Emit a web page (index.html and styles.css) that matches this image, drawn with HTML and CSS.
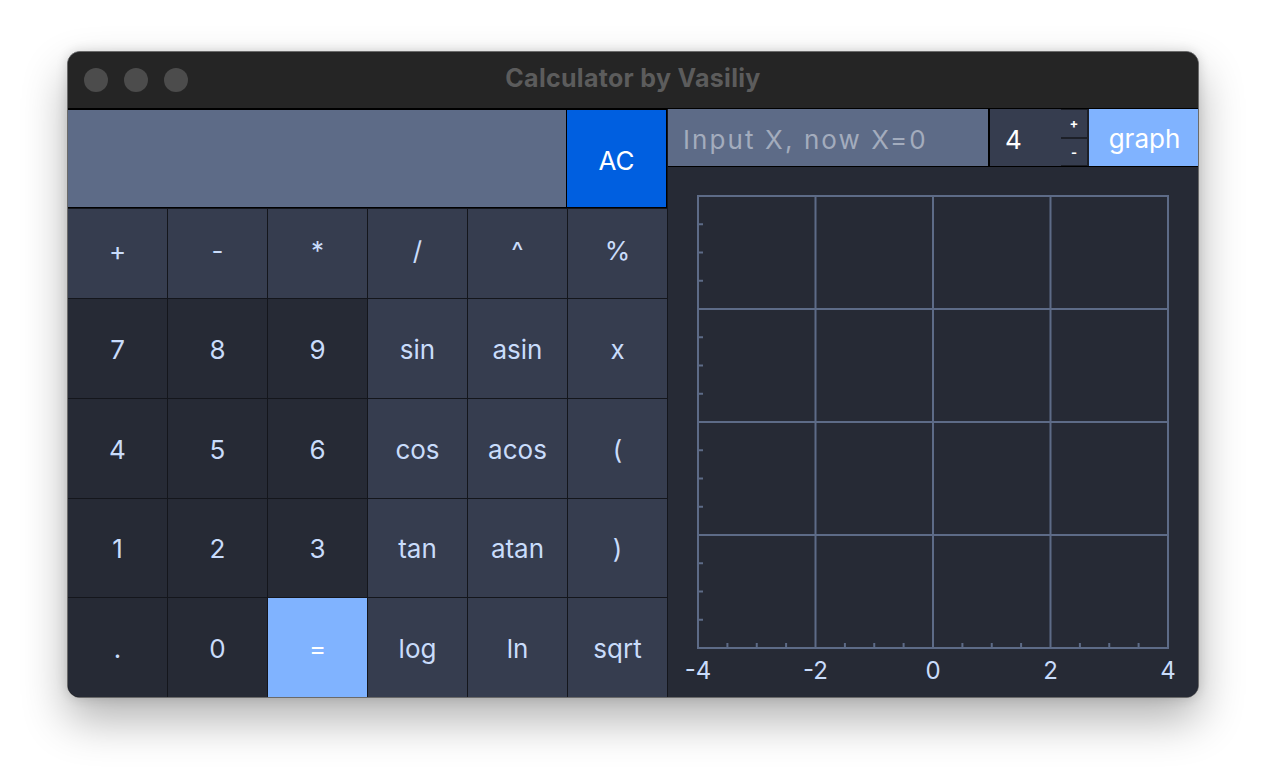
FILE: index.html
```html
<!DOCTYPE html>
<html lang="en">
<head>
<meta charset="utf-8">
<title>Calculator by Vasiliy</title>
<link rel="stylesheet" href="styles.css">
</head>
<body>
<div class="window">
  <div class="titlebar">
    <div class="lights"><span class="light"></span><span class="light"></span><span class="light"></span></div>
    <div class="title">Calculator by Vasiliy</div>
  </div>
  <div class="content">
    <div class="calc">
      <div class="top-row">
        <div class="display"></div>
        <button class="btn ac">AC</button>
      </div>
      <div class="keys">
        <button class="btn op">+</button>
        <button class="btn op">-</button>
        <button class="btn op">*</button>
        <button class="btn op">/</button>
        <button class="btn op">^</button>
        <button class="btn op">%</button>

        <button class="btn num">7</button>
        <button class="btn num">8</button>
        <button class="btn num">9</button>
        <button class="btn op">sin</button>
        <button class="btn op">asin</button>
        <button class="btn op">x</button>

        <button class="btn num">4</button>
        <button class="btn num">5</button>
        <button class="btn num">6</button>
        <button class="btn op">cos</button>
        <button class="btn op">acos</button>
        <button class="btn op">(</button>

        <button class="btn num">1</button>
        <button class="btn num">2</button>
        <button class="btn num">3</button>
        <button class="btn op">tan</button>
        <button class="btn op">atan</button>
        <button class="btn op">)</button>

        <button class="btn num">.</button>
        <button class="btn num">0</button>
        <button class="btn eq">=</button>
        <button class="btn op">log</button>
        <button class="btn op">ln</button>
        <button class="btn op">sqrt</button>
      </div>
    </div>
    <div class="graph-panel">
      <div class="controls">
        <input class="x-input" type="text" placeholder="Input X, now X=0">
        <div class="spin-value">4</div>
        <div class="spin-btns">
          <button class="spin">+</button>
          <button class="spin">-</button>
        </div>
        <button class="graph-btn">graph</button>
      </div>
      <div class="plot">
        <svg width="530" height="530" viewBox="0 0 530 530" xmlns="http://www.w3.org/2000/svg">
          <g stroke="#5d6b87" stroke-width="2" fill="none">
            <rect x="30" y="29" width="470" height="452"/>
            <line x1="147.5" y1="29" x2="147.5" y2="481"/>
            <line x1="265" y1="29" x2="265" y2="481"/>
            <line x1="382.5" y1="29" x2="382.5" y2="481"/>
            <line x1="30" y1="142" x2="500" y2="142"/>
            <line x1="30" y1="255" x2="500" y2="255"/>
            <line x1="30" y1="368" x2="500" y2="368"/>
          </g>
          <g fill="#c9dcfb" font-family="Inter, 'Liberation Sans', sans-serif" font-size="24" text-anchor="middle">
            <text x="30" y="512">-4</text>
            <text x="147.5" y="512">-2</text>
            <text x="265" y="512">0</text>
            <text x="382.5" y="512">2</text>
            <text x="500" y="512">4</text>
          </g>
          <g stroke="#5d6b87" stroke-width="2">
            <line x1="30" y1="57.25" x2="35" y2="57.25"/>
            <line x1="30" y1="85.5" x2="35" y2="85.5"/>
            <line x1="30" y1="113.75" x2="35" y2="113.75"/>
            <line x1="30" y1="170.25" x2="35" y2="170.25"/>
            <line x1="30" y1="198.5" x2="35" y2="198.5"/>
            <line x1="30" y1="226.75" x2="35" y2="226.75"/>
            <line x1="30" y1="283.25" x2="35" y2="283.25"/>
            <line x1="30" y1="311.5" x2="35" y2="311.5"/>
            <line x1="30" y1="339.75" x2="35" y2="339.75"/>
            <line x1="30" y1="396.25" x2="35" y2="396.25"/>
            <line x1="30" y1="424.5" x2="35" y2="424.5"/>
            <line x1="30" y1="452.75" x2="35" y2="452.75"/>

            <line x1="59.4" y1="481" x2="59.4" y2="476"/>
            <line x1="88.75" y1="481" x2="88.75" y2="476"/>
            <line x1="118.1" y1="481" x2="118.1" y2="476"/>
            <line x1="176.9" y1="481" x2="176.9" y2="476"/>
            <line x1="206.25" y1="481" x2="206.25" y2="476"/>
            <line x1="235.6" y1="481" x2="235.6" y2="476"/>
            <line x1="294.4" y1="481" x2="294.4" y2="476"/>
            <line x1="323.75" y1="481" x2="323.75" y2="476"/>
            <line x1="353.1" y1="481" x2="353.1" y2="476"/>
            <line x1="411.9" y1="481" x2="411.9" y2="476"/>
            <line x1="441.25" y1="481" x2="441.25" y2="476"/>
            <line x1="470.6" y1="481" x2="470.6" y2="476"/>
          </g>
        </svg>
      </div>
    </div>
  </div>
</div>
</body>
</html>
```

FILE: styles.css
```css
* { box-sizing: border-box; }

html, body {
  margin: 0;
  background: #ffffff;
}

body {
  min-height: 782px;
  padding: 51px 0 0 67px;
  font-family: Inter, "Liberation Sans", sans-serif;
}

.window {
  width: 1132px;
  height: 647px;
  border: 1px solid #6a6a6a;
  border-radius: 13px;
  overflow: hidden;
  background: #262a35;
  box-shadow: 0 22px 45px rgba(0, 0, 0, 0.30), 0 0 12px rgba(0, 0, 0, 0.14);
  display: flex;
  flex-direction: column;
}

.titlebar {
  height: 57px;
  background: #252525;
  border-bottom: 1px solid #000;
  display: flex;
  align-items: center;
  position: relative;
  flex: none;
}

.lights {
  display: flex;
  gap: 16px;
  padding-left: 16px;
}

.light {
  width: 24px;
  height: 24px;
  border-radius: 50%;
  background: #4c4c4c;
}

.title {
  position: absolute;
  left: 0;
  right: 0;
  top: 11px;
  text-align: center;
  color: #5c5c5c;
  font-weight: 700;
  font-size: 25px;
  letter-spacing: 0.3px;
}

.content {
  flex: 1;
  display: flex;
  min-height: 0;
}

.calc {
  width: 600px;
  flex: none;
  display: flex;
  flex-direction: column;
  background: #14161c;
  border-right: 1px solid #14161c;
}

.top-row {
  height: 99px;
  display: flex;
  flex: none;
}

.display {
  width: 500px;
  background: #5d6b87;
  border: 1px solid #000;
  border-left: none;
}

.btn {
  border: none;
  margin: 0;
  padding: 2px 0 0;
  font-family: Inter, "Liberation Sans", sans-serif;
  font-size: 26px;
  color: #c9dcfb;
  display: flex;
  align-items: center;
  justify-content: center;
}

.ac {
  width: 100px;
  background: #005fe0;
  color: #ffffff;
  border: 1px solid #000;
  border-left: none;
  padding-top: 4px;
}

.keys {
  flex: 1;
  display: grid;
  grid-template-columns: repeat(6, 1fr);
  grid-template-rows: 89px repeat(4, 1fr);
  gap: 1px;
  padding-top: 1px;
  background: #14161c;
}

.keys .op:nth-child(-n+6) {
  padding: 0 0 6px;
}

.op { background: #363d4f; }
.num { background: #262a35; }
.eq { background: #80b3ff; color: #ffffff; }

.graph-panel {
  flex: 1;
  display: flex;
  flex-direction: column;
  background: #262a35;
}

.controls {
  height: 58px;
  display: flex;
  flex: none;
  background: #000;
  padding-bottom: 1px;
}

.x-input {
  width: 320px;
  height: 100%;
  border: none;
  outline: none;
  background: #5d6b87;
  padding: 4px 0 0 15px;
  font-family: Inter, "Liberation Sans", sans-serif;
  font-size: 26px;
  letter-spacing: 2.1px;
  color: #ffffff;
}

.x-input::placeholder {
  color: #a3acbd;
}

.spin-value {
  width: 71px;
  margin-left: 2px;
  background: #363d4f;
  color: #ffffff;
  font-size: 26px;
  display: flex;
  align-items: center;
  padding: 4px 0 0 15px;
}

.spin-btns {
  width: 27px;
  display: flex;
  flex-direction: column;
  gap: 1px;
  background: #1d2028;
  padding: 1px 1px 0 0;
}

.spin {
  flex: 1;
  border: none;
  padding: 0;
  background: #363d4f;
  color: #ffffff;
  font-family: Inter, "Liberation Sans", sans-serif;
  font-weight: 700;
  font-size: 13px;
  border-bottom: 1px solid #1d2028;
}

.graph-btn {
  flex: 1;
  border: none;
  border-left: 1px solid #1d2028;
  margin: 0;
  background: #80b3ff;
  color: #ffffff;
  font-family: Inter, "Liberation Sans", sans-serif;
  font-size: 26px;
  padding: 2px 0 0 2px;
}

.plot {
  flex: 1;
  background: #262a35;
}

.plot svg {
  display: block;
}
```
